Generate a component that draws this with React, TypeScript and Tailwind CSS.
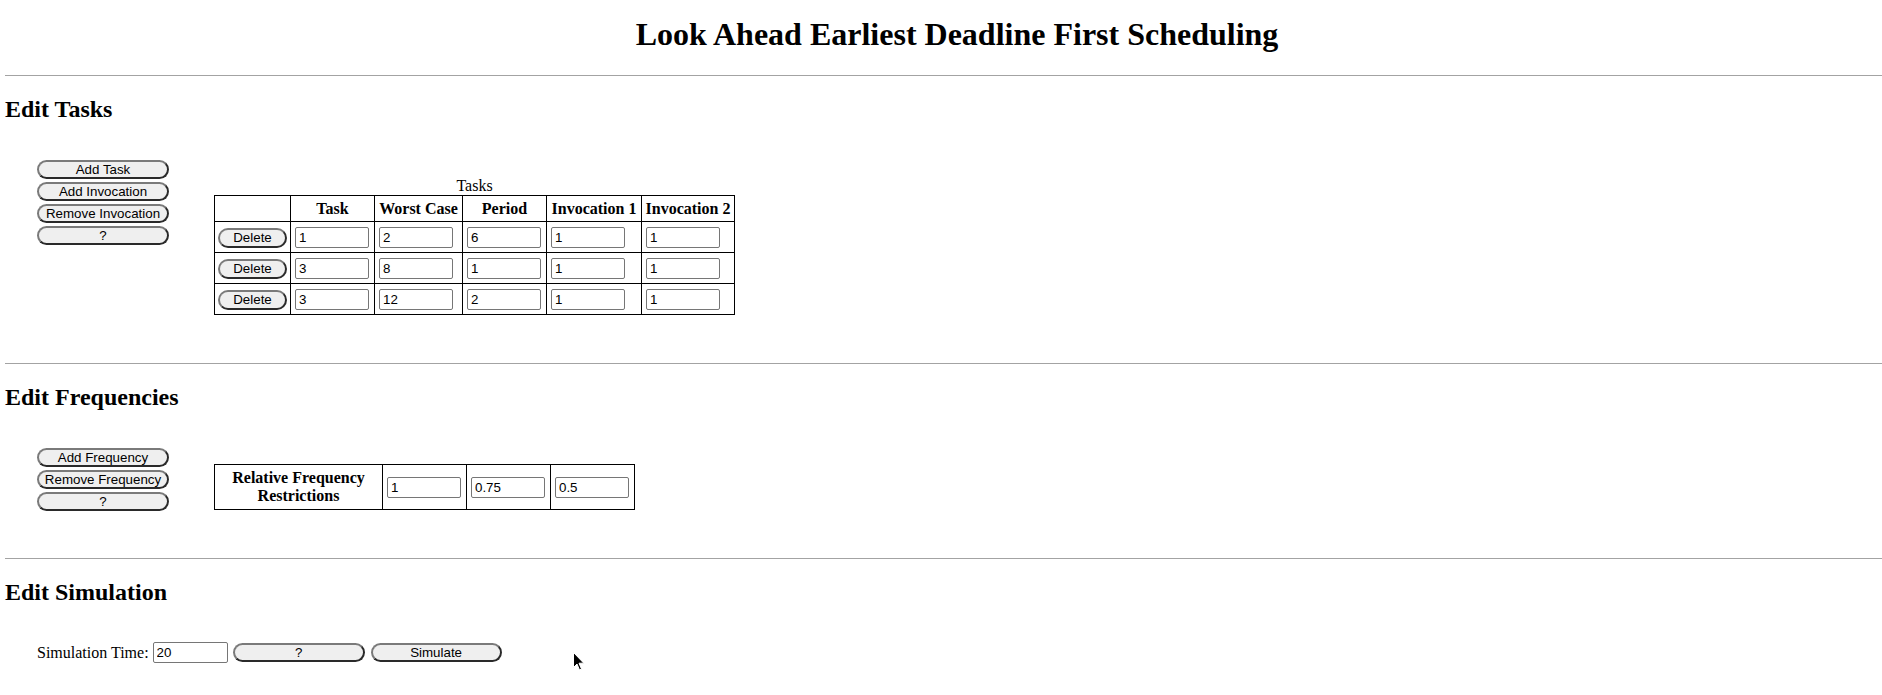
const tasks = [
  { task: "1", worst: "2", period: "6", inv1: "1", inv2: "1" },
  { task: "3", worst: "8", period: "1", inv1: "1", inv2: "1" },
  { task: "3", worst: "12", period: "2", inv1: "1", inv2: "1" },
];

const frequencies = ["1", "0.75", "0.5"];

function PillButton({ label, className = "" }: { label: string; className?: string }) {
  return (
    <button
      className={`h-[19px] rounded-full border-2 border-t-[#7a7a7a] border-l-[#7a7a7a] border-r-[#2a2a2a] border-b-[#2a2a2a] bg-[#efefef] px-0 text-[13.33px] leading-[15px] text-black font-['Liberation_Sans',Arial,sans-serif] ${className}`}
    >
      {label}
    </button>
  );
}

function Field({ value, className = "" }: { value: string; className?: string }) {
  return (
    <input
      defaultValue={value}
      className={`h-[21px] rounded-[2px] border border-[#767676] bg-white px-[3px] text-[13.33px] text-black font-['Liberation_Sans',Arial,sans-serif] outline-none ${className}`}
    />
  );
}

function SectionTitle({ children }: { children: string }) {
  return <h2 className="mt-[20px] text-[24px] font-bold leading-[26px]">{children}</h2>;
}

function Rule() {
  return <div className="h-0 border-t border-[#a3a3a3]" />;
}

function Cursor() {
  return (
    <svg className="absolute left-[573px] top-[636px]" width="12" height="19" viewBox="0 0 12 19">
      <path d="M0.5 0.5 L0.5 15.5 L4 12 L6.5 18 L8.5 17 L6 11.2 L10.8 11.2 Z" fill="#000" stroke="#fff" strokeWidth="1" />
    </svg>
  );
}

export default function App() {
  return (
    <div className="relative min-h-[695px] bg-white pl-[5px] text-black font-['Liberation_Serif','Times_New_Roman',serif]">
      <h1 className="mt-[16px] pl-[27px] text-center text-[32px] font-bold leading-[37px]">
        Look Ahead Earliest Deadline First Scheduling
      </h1>
      <div className="mt-[22px]">
        <Rule />
      </div>

      <SectionTitle>Edit Tasks</SectionTitle>
      <div className="mt-[38px] flex items-start pl-[32px]">
        <div className="flex w-[132px] flex-col gap-[3px]">
          <PillButton label="Add Task" />
          <PillButton label="Add Invocation" />
          <PillButton label="Remove Invocation" />
          <PillButton label="?" />
        </div>
        <div className="ml-[45px] mt-[16px]">
          <div className="text-center text-[16px] leading-[19px]">Tasks</div>
          <table className="border-collapse border border-black text-[16px]">
            <thead>
              <tr className="h-[26px]">
                <th className="w-[75px] border border-black"></th>
                <th className="w-[84px] border border-black px-[3px]">Task</th>
                <th className="w-[88px] border border-black px-[3px]">Worst Case</th>
                <th className="w-[84px] border border-black px-[3px]">Period</th>
                <th className="w-[95px] border border-black px-[3px]">Invocation 1</th>
                <th className="w-[93px] border border-black px-[3px]">Invocation 2</th>
              </tr>
            </thead>
            <tbody>
              {tasks.map((t, i) => (
                <tr key={i} className="h-[31px]">
                  <td className="border border-black px-[3px]">
                    <PillButton label="Delete" className="h-[20px] w-[69px]" />
                  </td>
                  <td className="border border-black px-[4px]">
                    <Field value={t.task} className="w-[74px]" />
                  </td>
                  <td className="border border-black px-[4px]">
                    <Field value={t.worst} className="w-[74px]" />
                  </td>
                  <td className="border border-black px-[4px]">
                    <Field value={t.period} className="w-[74px]" />
                  </td>
                  <td className="border border-black px-[4px]">
                    <Field value={t.inv1} className="w-[74px]" />
                  </td>
                  <td className="border border-black px-[4px]">
                    <Field value={t.inv2} className="w-[74px]" />
                  </td>
                </tr>
              ))}
            </tbody>
          </table>
        </div>
      </div>

      <div className="mt-[48px]">
        <Rule />
      </div>

      <SectionTitle>Edit Frequencies</SectionTitle>
      <div className="mt-[38px] flex items-start pl-[32px]">
        <div className="flex w-[132px] flex-col gap-[3px]">
          <PillButton label="Add Frequency" />
          <PillButton label="Remove Frequency" />
          <PillButton label="?" />
        </div>
        <table className="ml-[45px] mt-[16px] border-collapse border border-black text-[16px]">
          <tbody>
            <tr className="h-[45px]">
              <th className="w-[168px] border border-black px-[3px] leading-[18px]">
                Relative Frequency
                <br />
                Restrictions
              </th>
              {frequencies.map((f, i) => (
                <td key={i} className="w-[84px] border border-black px-[4px]">
                  <Field value={f} className="w-[74px]" />
                </td>
              ))}
            </tr>
          </tbody>
        </table>
      </div>

      <div className="mt-[47px]">
        <Rule />
      </div>

      <SectionTitle>Edit Simulation</SectionTitle>
      <div className="mt-[37px] flex items-center pl-[32px]">
        <span className="text-[16px] leading-[20px]">Simulation Time:</span>
        <Field value="20" className="ml-[4px] h-[20px] w-[75px]" />
        <PillButton label="?" className="ml-[5px] w-[132px]" />
        <PillButton label="Simulate" className="ml-[6px] w-[131px]" />
      </div>

      <Cursor />
    </div>
  );
}
